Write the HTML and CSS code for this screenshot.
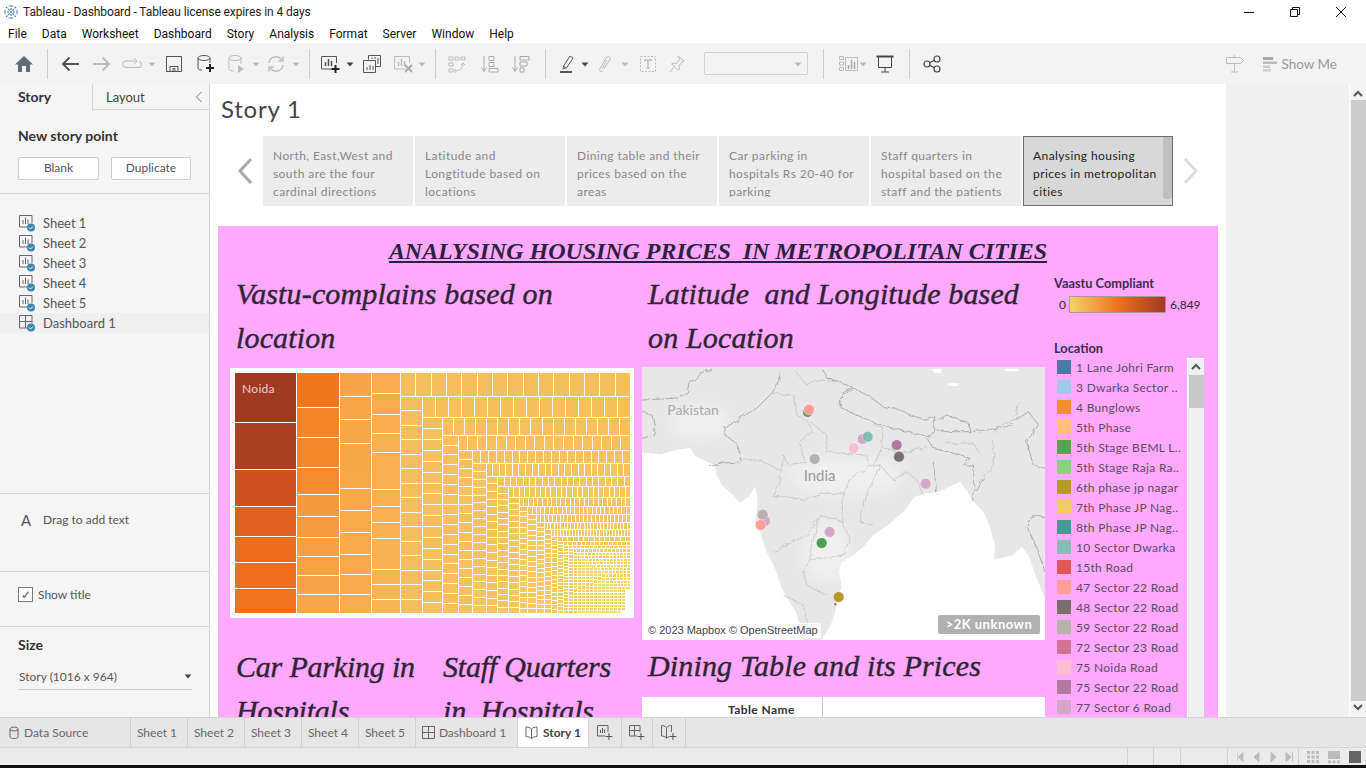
FILE: index.html
```html
<!DOCTYPE html>
<html lang="en">
<head>
    <meta charset="UTF-8">
    <meta name="viewport" content="width=device-width, initial-scale=1.0">
    <title>Tableau - Dashboard</title>
    <link rel="stylesheet" href="styles.css">
</head>
<body>
    <svg class="sprites" width="0" height="0">
        <symbol id="i-sheet" viewBox="0 0 18 18">
            <path d="M12 13H1.500V1.500H14V9" fill="none" stroke="#666"/>
            <path d="M5 10V6M7.500 10V3.500M10 10V5.500" stroke="#666"/>
            <circle cx="13" cy="13.500" r="4" fill="#3b86ab"/>
            <path d="M11 13.500l1.500 1.500 2.500-2.500" fill="none" stroke="#fff"/>
        </symbol>
        <symbol id="i-dash" viewBox="0 0 18 18">
            <path d="M11 14H1.500V1.500H14V9M1.500 7.500H14M7.500 1.500V14" fill="none" stroke="#666"/>
            <circle cx="13" cy="13.500" r="4" fill="#3b86ab"/>
            <path d="M11 13.500l1.500 1.500 2.500-2.500" fill="none" stroke="#fff"/>
        </symbol>
        <symbol id="i-caret" viewBox="0 0 8 20">
            <path d="M0.500 8.500h7L4 12.500z"/>
        </symbol>
        <filter id="wiggle" x="-5%" y="-5%" width="110%" height="110%">
            <feTurbulence type="fractalNoise" baseFrequency=".05" numOctaves="3" seed="4"/>
            <feDisplacementMap in="SourceGraphic" scale="14"/>
        </filter>
        <filter id="soft" x="-20%" y="-20%" width="140%" height="140%">
            <feGaussianBlur stdDeviation="22"/>
        </filter>
    </svg>

    <header class="title-bar">
        <svg class="app-logo" width="16" height="16" viewBox="0 0 16 16">
            <path d="M8 1v14M1 8h14M3 3l10 10M13 3L3 13" stroke="#3f7fb5" stroke-width="1.200" stroke-dasharray="2 1"/>
            <path d="M5.500 2h5M5.500 14h5M2 5.500v5M14 5.500v5" stroke="#7fa9cc"/>
        </svg>
        <span class="app-title">Tableau - Dashboard - Tableau license expires in 4 days</span>
        <div class="win-controls">
            <svg width="12" height="12" viewBox="0 0 12 12"><path d="M1 6.500h10" stroke="#111"/></svg>
            <svg width="12" height="12" viewBox="0 0 12 12"><path d="M1.500 3.500h7v7h-7zM3.500 3.500v-2h7v7h-2" fill="none" stroke="#111"/></svg>
            <svg width="12" height="12" viewBox="0 0 12 12"><path d="M1 1l10 10M11 1L1 11" stroke="#111"/></svg>
        </div>
    </header>

    <nav class="menu-bar">
        <span>File</span><span>Data</span><span>Worksheet</span><span>Dashboard</span><span>Story</span>
        <span>Analysis</span><span>Format</span><span>Server</span><span>Window</span><span>Help</span>
    </nav>

    <div class="toolbar">
        <svg class="tool first" viewBox="0 0 20 20"><path d="M10 2l9 8.500h-3V18h-4v-6H8v6H4v-7.500H1z" fill="#5e6b78"/></svg>
        <i class="sep s13"></i>
        <svg class="tool s12" viewBox="0 0 20 20"><path d="M19 10H3M9.500 3.500L3 10l6.500 6.500" fill="none" stroke="#555" stroke-width="2"/></svg>
        <svg class="tool s12" viewBox="0 0 20 20"><path d="M1 10h16M10.500 3.500L17 10l-6.500 6.500" fill="none" stroke="#bbb" stroke-width="2"/></svg>
        <svg class="tool s10" viewBox="0 0 20 20"><path d="M14 7H4a3 3 0 0 0 0 6.500h12a3 3 0 0 0 1-6M12 4l3 3-3 3" fill="none" stroke="#bbb"/></svg>
        <svg class="caret s6 off" viewBox="0 0 8 20"><use href="#i-caret"/></svg>
        <svg class="tool s8" viewBox="0 0 20 20"><path d="M2.500 2.500h15v15h-15zM6 17.500v-5h8v5M9 14.500h2v3H9z" fill="none" stroke="#555"/></svg>
        <svg class="tool s11" viewBox="0 0 20 20"><path d="M3 4v10c0 1.500 2 2 4 2M15 4v5" fill="none" stroke="#555"/><ellipse cx="9" cy="4" rx="6" ry="2.500" fill="none" stroke="#555"/><path d="M15 10v8M11 14h8" stroke="#222" stroke-width="2"/></svg>
        <svg class="tool s11" viewBox="0 0 20 20"><path d="M3 4v11c0 1.500 2 2 5 2M15 4v6" fill="none" stroke="#bbb"/><ellipse cx="9" cy="4" rx="6" ry="2.500" fill="none" stroke="#bbb"/><path d="M12 11l6 4-6 4z" fill="#bbb"/></svg>
        <svg class="caret s6 off" viewBox="0 0 8 20"><use href="#i-caret"/></svg>
        <svg class="tool s6" viewBox="0 0 20 20"><path d="M3 9a7 7 0 0 1 12-4l2 2M17 11a7 7 0 0 1-12 4l-2-2M17 2.500V7h-4.500M3 17.500V13h4.500" fill="none" stroke="#bbb" stroke-width="1.300"/></svg>
        <svg class="caret s6 off" viewBox="0 0 8 20"><use href="#i-caret"/></svg>
        <i class="sep s9"></i>
        <svg class="tool s10" viewBox="0 0 20 20"><path d="M13 15H1.500V2.500h15V9" fill="none" stroke="#555"/><path d="M5.500 12V8M8.500 12V5M11.500 12V7" stroke="#555" stroke-width="1.500"/><path d="M15.500 11v8M11.500 15h8" stroke="#222" stroke-width="2"/></svg>
        <svg class="caret s6 on" viewBox="0 0 8 20"><use href="#i-caret"/></svg>
        <svg class="tool s8" viewBox="0 0 20 20"><path d="M6.500 5.500v-4h12v11h-5M1.500 6.500h12v12h-12z" fill="#f3f3f3" stroke="#555"/><path d="M10 5V3.500M13 5V3M16 10V4M5 16v-3M8 16v-5M11 16v-4" stroke="#555"/></svg>
        <svg class="tool s11" viewBox="0 0 20 20"><path d="M12 15H1.500V2.500h15V9" fill="none" stroke="#bbb"/><path d="M5.500 12V8M8.500 12V5M11.500 12V7" stroke="#bbb" stroke-width="1.500"/><path d="M12 11l7 7M19 11l-7 7" stroke="#aaa" stroke-width="2"/></svg>
        <svg class="caret s5 off" viewBox="0 0 8 20"><use href="#i-caret"/></svg>
        <i class="sep s9"></i>
        <svg class="tool s11" viewBox="0 0 20 20"><path d="M2 3h4v3H2zM8 3h4v3H8zM14 3h4v3h-4zM2 9h4v3H2zM2 15h4v3H2z" fill="none" stroke="#bbb"/><path d="M16 9c0 5-3 8-8 8M8 14.500V19M14 11l2-2 2 2" fill="none" stroke="#bbb"/></svg>
        <svg class="tool s13" viewBox="0 0 20 20"><path d="M4 2v15M1.500 13.500L4 17.500l2.500-4M9 2.500h5v4H9zM9 8.500h5v4H9zM9 14.500h9v3.500H9z" fill="none" stroke="#aaa"/></svg>
        <svg class="tool s11" viewBox="0 0 20 20"><path d="M4 2v15M1.500 13.500L4 17.500l2.500-4M9 2.500h9v3.500H9zM9 8h7v4H9zM9 14h4v4H9z" fill="none" stroke="#aaa"/></svg>
        <i class="sep s14"></i>
        <svg class="tool s12" viewBox="0 0 20 20"><path d="M7 14l-2 1 .5-3L12 2l3 2-6.500 10zM5 12l3 2" fill="none" stroke="#555"/><path d="M2 18h12" stroke="#555" stroke-width="2"/></svg>
        <svg class="caret s3 on" viewBox="0 0 8 20"><use href="#i-caret"/></svg>
        <svg class="tool s6" viewBox="0 0 20 20"><path d="M8 17c-2 1.500-4 0-3-2.500L11 4c1.500-2.500 5-1 4 1.500L9.500 14c-.8 1.300-2.300.5-1.700-.8L12 6" fill="none" stroke="#bbb"/></svg>
        <svg class="caret s6 off" viewBox="0 0 8 20"><use href="#i-caret"/></svg>
        <svg class="tool s9" viewBox="0 0 20 20"><path d="M2.500 2.500h15v15h-15z" fill="none" stroke="#bbb" stroke-dasharray="2 1.500"/><path d="M6.500 7V6h7v1M10 6v8M8.500 14h3" fill="none" stroke="#aaa"/></svg>
        <svg class="tool s9" viewBox="0 0 20 20"><path d="M11 2l6 5-2 1-3 4 .5 3-2 .5-6-5.500 2-1 3 .5 3-4zM7 13l-4 5" fill="none" stroke="#bbb"/></svg>
        <div class="combo"><svg class="caret off" viewBox="0 0 8 20"><use href="#i-caret"/></svg></div>
        <i class="sep s15"></i>
        <svg class="tool s14" viewBox="0 0 20 20"><path d="M1.500 2.500h4v3h-4zM1.500 8h4v3h-4zM1.500 13.500h4v3h-4zM7.500 3.500h12v13h-12z" fill="none" stroke="#bbb"/><path d="M10.500 15v-4M13.500 15V6M16.500 15V8" stroke="#aaa" stroke-width="1.500"/></svg>
        <svg class="caret s1 off" viewBox="0 0 8 20"><use href="#i-caret"/></svg>
        <svg class="tool s8" viewBox="0 0 20 20"><path d="M1.500 2.500h17" stroke="#444" stroke-width="2"/><path d="M3.500 3v10.500h13V3M10 13.500v4.500M6 18h8" fill="none" stroke="#444"/></svg>
        <i class="sep s14"></i>
        <svg class="tool s12" viewBox="0 0 20 20"><g fill="none" stroke="#444" stroke-width="1.200"><circle cx="5" cy="10" r="3"/><circle cx="15" cy="5" r="3"/><circle cx="15" cy="15" r="3"/><path d="M7.700 8.700l4.600-2.400M7.700 11.300l4.600 2.400"/></g></svg>
        <div class="toolbar-right">
            <svg class="tool" viewBox="0 0 20 20"><path d="M1.500 3.500h14l3 3-3 3h-14zM9.500 1v2.500M9.500 9.500v8M6 18h7" fill="none" stroke="#bbb"/></svg>
            <svg class="showme-icon" viewBox="0 0 16 16"><path d="M1 1h10v3H1z" fill="#aaa"/><path d="M1 5.500h14v2.500H1z" fill="#bbb"/><path d="M1 9.500h7V12H1z" fill="#ccc"/><path d="M1 13h8v2.500H1z" fill="#ccc"/></svg>
            <span class="showme-text">Show Me</span>
        </div>
    </div>

    <div class="workspace">
        <aside class="sidebar">
            <div class="side-tabs">
                <div class="side-tab active">Story</div>
                <div class="side-tab">Layout
                    <svg class="collapse" width="8" height="12" viewBox="0 0 8 12"><path d="M6.500 1l-5 5 5 5" fill="none" stroke="#777"/></svg>
                </div>
            </div>
            <section class="new-point">
                <h3>New story point</h3>
                <div class="btn-row">
                    <button class="side-btn blank">Blank</button>
                    <button class="side-btn dup">Duplicate</button>
                </div>
            </section>
            <section class="sheet-list">
                <div class="sheet-row"><svg width="18" height="18"><use href="#i-sheet"/></svg>Sheet 1</div>
                <div class="sheet-row"><svg width="18" height="18"><use href="#i-sheet"/></svg>Sheet 2</div>
                <div class="sheet-row"><svg width="18" height="18"><use href="#i-sheet"/></svg>Sheet 3</div>
                <div class="sheet-row"><svg width="18" height="18"><use href="#i-sheet"/></svg>Sheet 4</div>
                <div class="sheet-row"><svg width="18" height="18"><use href="#i-sheet"/></svg>Sheet 5</div>
                <div class="sheet-row selected"><svg width="18" height="18"><use href="#i-dash"/></svg>Dashboard 1</div>
            </section>
            <section class="add-text"><span class="big-a">A</span>Drag to add text</section>
            <section class="show-title"><span class="checkbox">✓</span>Show title</section>
            <section class="size-box">
                <h3>Size</h3>
                <div class="size-select">Story (1016 x 964)<svg class="caret on" viewBox="0 0 8 20"><use href="#i-caret"/></svg></div>
            </section>
        </aside>

        <main class="story">
            <div class="story-title">Story 1</div>
            <div class="navigator">
                <svg class="nav-arrow" width="16" height="28" viewBox="0 0 16 28"><path d="M14 2L3 14l11 12" fill="none" stroke="#aaa" stroke-width="3"/></svg>
                <div class="point"><p>North, East,West and south are the four cardinal directions</p></div>
                <div class="point"><p>Latitude and Longtitude based on locations</p></div>
                <div class="point"><p>Dining table and their prices based on the areas</p></div>
                <div class="point"><p>Car parking in hospitals Rs 20-40 for parking</p></div>
                <div class="point"><p>Staff quarters in hospital based on the staff and the patients</p></div>
                <div class="point current"><p>Analysing housing prices in metropolitan cities</p></div>
                <svg class="nav-arrow next" width="16" height="28" viewBox="0 0 16 28"><path d="M2 2l11 12L2 26" fill="none" stroke="#ddd" stroke-width="3"/></svg>
            </div>

            <div class="dashboard">
                <h1 class="dash-head">ANALYSING HOUSING PRICES&nbsp; IN METROPOLITAN CITIES</h1>
                <div class="dash-cols">
                    <div class="col-left">
                        <h2 class="viz-title">Vastu-complains based on location</h2>
                        <div class="treemap-frame">
                            <svg id="treemap" class="treemap" viewBox="15 24 1185 720"></svg>
                            <span class="noida">Noida</span>
                        </div>
                        <div class="two-titles">
                            <h2 class="viz-title">Car Parking in Hospitals</h2>
                            <h2 class="viz-title">Staff Quarters in&nbsp; Hospitals</h2>
                        </div>
                    </div>

                    <div class="col-mid">
                        <h2 class="viz-title short">Latitude&nbsp; and Longitude based on Location</h2>
                        <div class="map">
                            <svg class="map-svg" viewBox="6 6 1209 819">
                                <rect x="6" y="6" width="1209" height="819" fill="#e7e7e7"/>
                                <g fill="#f0f0f0" filter="url(#soft)">
                                    <ellipse cx="620" cy="330" rx="170" ry="60"/>
                                    <ellipse cx="560" cy="560" rx="70" ry="90"/>
                                    <ellipse cx="180" cy="170" rx="90" ry="50"/>
                                </g>
                                <path d="M6 262L60 268 110 255 150 248 165 272 190 285 222 300 230 330 245 360 285 395 300 415 325 395 345 365 352 395 352 430 345 470 360 500 380 560 405 610 425 670 445 705 470 745 480 790 490 825H6Z" fill="#fff"/>
                                <path d="M545 825L570 785 585 745 590 705 605 665 597 620 605 590 640 570 670 545 700 510 745 480 790 440 825 395 860 385 895 380 960 350 985 385 1000 410 1030 440 1045 470 1065 540 1062 585 1120 570 1145 545 1165 570 1190 640 1205 675 1215 700V825Z" fill="#fff"/>
                                <path d="M875 12h30v12h-20zM925 55h30v8h-30zM1095 12h40v6h-40z" fill="#fff"/>
                                <g filter="url(#wiggle)" fill="none" stroke-linejoin="round">
                                    <g stroke="#8d8d8d" stroke-width="2">
                                        <path d="M415 15L420 50 395 85 350 130 290 165 255 190 255 210 290 235 302 270 300 290 240 295 210 305"/>
                                        <path d="M6 105L100 100 145 85 150 55 190 20 215 12"/>
                                        <path d="M6 140L35 150 47 185 40 210 6 220"/>
                                        <path d="M550 15L560 40 600 50 640 70 690 95 730 125 770 130 810 150 860 165 885 155 880 195"/>
                                        <path d="M640 70L605 85 600 125 650 150 720 180 800 200 860 215 885 200"/>
                                        <path d="M885 170L920 150 985 175 990 200 920 200 890 195"/>
                                        <path d="M860 220L880 250 930 262 990 280 970 300 1000 300 1005 380 995 405"/>
                                        <path d="M880 290L890 385"/>
                                        <path d="M1000 200L1100 185 1165 140 1195 180 1160 230 1180 300 1215 310"/>
                                        <path d="M1030 340L1010 378"/>
                                        <path d="M1160 490L1180 450 1215 455M1165 490L1190 550 1215 620"/>
                                    </g>
                                    <g stroke="#b4b4b4" stroke-width="1.800">
                                        <path d="M463 15L500 60 525 45 600 50M400 85L460 90 470 150 505 170 515 200 480 235 495 290 445 300 430 270 425 320 410 375 400 395 440 395 490 405 540 385 610 385 630 340 690 305 720 300 760 345 800 320 830 345 850 390"/>
                                        <path d="M300 285L360 285 430 320M510 170L560 210 560 260 610 265 680 270 690 305M700 180L730 190 725 250 700 300M730 250L790 265 860 245M610 385L605 470 630 520M720 300L680 390 660 470 700 480M540 450L610 470M540 450L510 560 510 585 610 570 630 520M510 585L490 620 500 660 560 690M400 560L500 510 540 450M430 690L490 720 500 770M920 235L1000 235 1020 265M1060 225L1060 300 1030 340M1135 110L1130 150 1060 200"/>
                                    </g>
                                </g>
                                <text class="map-label" x="82" y="151">Pakistan</text>
                                <text class="map-label india" x="491" y="349">India</text>
                                <g stroke="#fff" stroke-width="2" stroke-opacity=".5">
                                    <circle cx="503" cy="142" r="15" fill="#59a14f"/>
                                    <circle cx="507" cy="134" r="16" fill="#ff9d9a"/>
                                    <circle cx="668" cy="222" r="16" fill="#d4a6c8"/>
                                    <circle cx="683" cy="215" r="16" fill="#86bcb6"/>
                                    <circle cx="641" cy="249" r="16" fill="#fabfd2"/>
                                    <circle cx="770" cy="240" r="16" fill="#b07aa1"/>
                                    <circle cx="777" cy="275" r="16" fill="#79706e"/>
                                    <circle cx="524" cy="282" r="16" fill="#bab0ac"/>
                                    <circle cx="857" cy="356" r="16" fill="#d4a6c8"/>
                                    <circle cx="375" cy="468" r="16" fill="#d4a6c8"/>
                                    <circle cx="368" cy="449" r="16" fill="#bab0ac"/>
                                    <circle cx="362" cy="480" r="16" fill="#ff9d9a"/>
                                    <circle cx="569" cy="501" r="16" fill="#d4a6c8"/>
                                    <circle cx="545" cy="534" r="16" fill="#4e9f50"/>
                                    <circle cx="596" cy="696" r="16" fill="#b6992d"/>
                                </g>
                                <circle cx="586" cy="718" r="4" fill="#888"/>
                            </svg>
                            <span class="map-credit">© 2023 Mapbox © OpenStreetMap</span>
                            <span class="map-unknown">&gt;2K unknown</span>
                        </div>
                        <h2 class="viz-title dining">Dining Table and its Prices</h2>
                        <div class="dining-table">
                            <div class="table-head">Table Name</div>
                        </div>
                    </div>

                    <div class="col-legend">
                        <div class="legend-name">Vaastu Compliant</div>
                        <div class="ramp-row"><span class="ramp-min">0</span><span class="ramp"></span><span>6,849</span></div>
                        <div class="legend-name location">Location</div>
                        <div class="legend-box">
                            <ul class="legend-list">
                                <li><i class="swatch c1"></i>1 Lane Johri Farm</li>
                                <li><i class="swatch c2"></i>3 Dwarka Sector ..</li>
                                <li><i class="swatch c3"></i>4 Bunglows</li>
                                <li><i class="swatch c4"></i>5th Phase</li>
                                <li><i class="swatch c5"></i>5th Stage BEML L..</li>
                                <li><i class="swatch c6"></i>5th Stage Raja Ra..</li>
                                <li><i class="swatch c7"></i>6th phase jp nagar</li>
                                <li><i class="swatch c8"></i>7th Phase JP Nag..</li>
                                <li><i class="swatch c9"></i>8th Phase JP Nag..</li>
                                <li><i class="swatch c10"></i>10 Sector Dwarka</li>
                                <li><i class="swatch c11"></i>15th Road</li>
                                <li><i class="swatch c12"></i>47 Sector 22 Road</li>
                                <li><i class="swatch c13"></i>48 Sector 22 Road</li>
                                <li><i class="swatch c14"></i>59 Sector 22 Road</li>
                                <li><i class="swatch c15"></i>72 Sector 23 Road</li>
                                <li><i class="swatch c16"></i>75 Noida Road</li>
                                <li><i class="swatch c17"></i>75 Sector 22 Road</li>
                                <li><i class="swatch c18"></i>77 Sector 6 Road</li>
                            </ul>
                            <div class="legend-scroll">
                                <svg class="chev" width="10" height="8" viewBox="0 0 10 8"><path d="M1 6l4-4 4 4" fill="none" stroke="#555" stroke-width="2"/></svg>
                                <span class="legend-thumb"></span>
                            </div>
                        </div>
                    </div>
                </div>
            </div>
        </main>

        <div class="story-gutter"></div>
        <div class="page-scroll">
            <svg class="scroll-arrow" width="10" height="8" viewBox="0 0 10 8"><path d="M1 6l4-4 4 4" fill="none" stroke="#555" stroke-width="2"/></svg>
            <span class="page-thumb"></span>
            <svg class="scroll-arrow" width="10" height="8" viewBox="0 0 10 8"><path d="M1 2l4 4 4-4" fill="none" stroke="#555" stroke-width="2"/></svg>
        </div>
    </div>

    <div class="tab-bar">
        <div class="tab source">
            <svg width="12" height="14" viewBox="0 0 12 14"><ellipse cx="6" cy="3" rx="4" ry="2" fill="none" stroke="#666"/><path d="M2 3v8c0 2 8 2 8 0V3" fill="none" stroke="#666"/></svg>
            Data Source
        </div>
        <div class="tab sheet">Sheet 1</div>
        <div class="tab sheet">Sheet 2</div>
        <div class="tab sheet">Sheet 3</div>
        <div class="tab sheet">Sheet 4</div>
        <div class="tab sheet">Sheet 5</div>
        <div class="tab dash">
            <svg width="13" height="13" viewBox="0 0 13 13"><path d="M.500.500h12v12H.500zM.500 6.500h12M6.500.500v12" fill="none" stroke="#666"/></svg>
            Dashboard 1
        </div>
        <div class="tab story-tab">
            <svg width="13" height="13" viewBox="0 0 13 13"><path d="M6.500 3C5 1.500 3 1 1 1v9.500c2 0 4 .5 5.500 2 1.500-1.500 3.500-2 5.500-2V1c-2 0-4 .5-5.500 2zv9.500" fill="none" stroke="#666"/></svg>
            Story 1
        </div>
        <div class="tab add">
            <svg width="17" height="17" viewBox="0 0 17 17"><path d="M9 12H1.500V1.500H12V8" fill="none" stroke="#666"/><path d="M4.500 9V6M6.500 9V4M8.500 9V5.500M13 9v7M9.500 12.500h7" stroke="#555"/></svg>
        </div>
        <div class="tab add narrow">
            <svg width="17" height="17" viewBox="0 0 17 17"><path d="M9 12H1.500V1.500H12V8M1.500 6.500H12M6.500 1.500V12" fill="none" stroke="#666"/><path d="M13 9v7M9.500 12.500h7" stroke="#555"/></svg>
        </div>
        <div class="tab add">
            <svg width="17" height="17" viewBox="0 0 17 17"><path d="M9 12.500L6.500 14C5 12.500 3 12 1.500 12V1.500C3 1.500 5 2 6.500 3.500 8 2 10 1.500 11.500 1.500V8M6.500 3.500V14" fill="none" stroke="#666"/><path d="M13 9v7M9.500 12.500h7" stroke="#555"/></svg>
        </div>
    </div>

    <footer class="status-bar">
        <span class="seg w26"></span>
        <span class="seg w27"></span>
        <span class="seg w47"></span>
        <div class="seg tab-nav">
            <svg width="60" height="10" viewBox="0 0 60 10"><path d="M0 .500v9M6 .500L1.500 5 6 9.500zM22 .500L17 5l5 4.500zM34 .500L39 5l-5 4.500zM49 .500L54 5l-5 4.500zM55.500 .500v9" fill="#bbb" stroke="#bbb"/></svg>
        </div>
        <div class="seg view-icons">
            <svg width="12" height="12" viewBox="0 0 12 12"><path d="M0 0h3v3H0zM4.500 0h3v3h-3zM9 0h3v3H9zM0 4.500h3v3H0zM4.500 4.500h3v3h-3zM9 4.500h3v3H9zM0 9h3v3H0zM4.500 9h3v3h-3zM9 9h3v3H9z" fill="#bbb"/></svg>
            <svg width="12" height="12" viewBox="0 0 12 12"><path d="M0 0h12v8H0zM0 9.500h3V12H0zM4.500 9.500h3V12h-3zM9 9.500h3V12H9z" fill="#bbb"/></svg>
            <svg width="12" height="12" viewBox="0 0 12 12"><path d="M0 0h12v12H0z" fill="#666"/></svg>
        </div>
    </footer>
    <div class="black-strip"></div>

    <script src="treemap.js"></script>
</body>
</html>
```
FILE: styles.css
```css
* {
    box-sizing: border-box;
    margin: 0;
    padding: 0;
}

body {
    width: 1366px;
    height: 768px;
    overflow: hidden;
    display: flex;
    flex-direction: column;
    font-family: "Lato", "Liberation Sans", sans-serif;
    font-size: 13px;
    color: #555;
    background-color: #fff;
}

.sprites {
    position: absolute;
}

/* window chrome */
.title-bar {
    height: 24px;
    display: flex;
    align-items: center;
    padding-left: 3px;
    background-color: #fff;
    color: #222;
    font-family: "Roboto", sans-serif;
    font-size: 12px;
}

.app-title {
    margin-left: 4px;
    letter-spacing: -.1px;
}

.win-controls {
    margin-left: auto;
    display: flex;
    gap: 34px;
    padding-right: 19px;
}

.menu-bar {
    height: 19px;
    display: flex;
    align-items: center;
    gap: 15px;
    padding-left: 8px;
    background-color: #fff;
    color: #111;
    font-family: "Roboto", sans-serif;
    font-size: 12px;
}

/* toolbar */
.toolbar {
    height: 41px;
    display: flex;
    align-items: center;
    background-color: #f3f3f3;
}

.tool {
    width: 20px;
    height: 20px;
    flex: none;
}

.tool.first {
    margin-left: 14px;
}

.caret {
    width: 8px;
    height: 20px;
    flex: none;
}

.caret.off {
    fill: #bbb;
}

.caret.on {
    fill: #444;
}

.sep {
    width: 1px;
    height: 30px;
    flex: none;
    background-color: #ccc;
}

.s1 { margin-left: 1px; }
.s3 { margin-left: 3px; }
.s5 { margin-left: 5px; }
.s6 { margin-left: 6px; }
.s8 { margin-left: 8px; }
.s9 { margin-left: 9px; }
.s10 { margin-left: 10px; }
.s11 { margin-left: 11px; }
.s12 { margin-left: 12px; }
.s13 { margin-left: 13px; }
.s14 { margin-left: 14px; }
.s15 { margin-left: 15px; }

.combo {
    width: 104px;
    height: 23px;
    margin-left: 17px;
    flex: none;
    display: flex;
    align-items: center;
    justify-content: flex-end;
    padding-right: 5px;
    border: 1px solid #d2d2d2;
    border-radius: 2px;
}

.toolbar-right {
    margin-left: auto;
    display: flex;
    align-items: center;
    padding-right: 29px;
}

.showme-icon {
    width: 16px;
    height: 16px;
    margin-left: 17px;
}

.showme-text {
    margin-left: 3px;
    font-size: 13.500px;
    color: #999;
}

/* main area */
.workspace {
    flex: 1;
    display: flex;
    overflow: hidden;
    min-height: 0;
}

.sidebar {
    width: 210px;
    flex: none;
    display: flex;
    flex-direction: column;
    background-color: #f5f5f5;
    border-right: 1px solid #d4d4d4;
}

.side-tabs {
    height: 26px;
    display: flex;
    flex: none;
}

.side-tab {
    position: relative;
    width: 117px;
    padding: 5px 0 0 13px;
    border-bottom: 1px solid #d4d4d4;
    border-left: 1px solid #d4d4d4;
    color: #444;
}

.side-tab.active {
    width: 92px;
    padding-top: 4px;
    padding-left: 18px;
    border: none;
    font-size: 14px;
    font-weight: 700;
    color: #333;
}

.collapse {
    position: absolute;
    right: 6px;
    top: 7px;
}

.new-point {
    height: 84px;
    flex: none;
    padding: 17px 18px 0;
    border-bottom: 1px solid #d4d4d4;
}

.sidebar h3 {
    font-size: 14px;
    line-height: 17px;
    font-weight: 700;
    color: #333;
}

.btn-row {
    display: flex;
    gap: 12px;
    margin-top: 13px;
}

.side-btn {
    height: 23px;
    padding-bottom: 2px;
    border: 1px solid #ccc;
    border-radius: 2px;
    background-color: #fff;
    color: #555;
    font-family: inherit;
    font-size: 12px;
}

.side-btn.blank {
    width: 81px;
}

.side-btn.dup {
    width: 80px;
}

.sheet-list {
    height: 300px;
    flex: none;
    padding-top: 19px;
    border-bottom: 1px solid #d4d4d4;
}

.sheet-row {
    height: 20px;
    display: flex;
    align-items: center;
    gap: 7px;
    padding-left: 18px;
    color: #555;
}

.sheet-row.selected {
    background-color: #efefef;
}

.add-text {
    height: 78px;
    flex: none;
    display: flex;
    align-items: flex-start;
    padding: 18px 0 0 21px;
    border-bottom: 1px solid #d4d4d4;
    font-size: 12px;
}

.big-a {
    width: 22px;
    font-size: 15px;
    line-height: 16px;
    color: #555;
}

.show-title {
    height: 55px;
    flex: none;
    display: flex;
    align-items: flex-start;
    gap: 5px;
    padding: 15px 0 0 18px;
    border-bottom: 1px solid #d4d4d4;
    font-size: 12px;
    line-height: 16px;
}

.checkbox {
    width: 15px;
    height: 15px;
    border: 1px solid #777;
    background-color: #fff;
    font-size: 12px;
    line-height: 13px;
    text-align: center;
}

.size-box {
    padding: 9px 18px 0;
}

.size-select {
    position: relative;
    height: 27px;
    margin-top: 10px;
    padding-top: 6px;
    border-bottom: 1px solid #ccc;
    font-size: 12px;
    width: 174px;
    padding-left: 1px;
}

.size-select .caret {
    position: absolute;
    right: 0;
    top: 3px;
}

.story {
    width: 1016px;
    flex: none;
    overflow: hidden;
    background-color: #fff;
}

.story-title {
    height: 52px;
    padding: 8px 0 0 11px;
    font-size: 24px;
    line-height: 34px;
    color: #444;
    letter-spacing: .8px;
}

.navigator {
    height: 70px;
    display: flex;
    align-items: center;
    gap: 2px;
    padding-left: 53px;
    position: relative;
}

.nav-arrow {
    position: absolute;
    left: 27px;
    top: 21px;
}

.nav-arrow.next {
    left: 973px;
}

.point {
    width: 150px;
    height: 70px;
    flex: none;
    padding: 11px 10px 0 10px;
    background-color: #ececec;
    color: #888;
    font-size: 12px;
    line-height: 18px;
    letter-spacing: .42px;
}

.point p {
    height: 50px;
    overflow: hidden;
}

.point.current {
    position: relative;
    padding-top: 10px;
    padding-left: 9px;
    border: 1px solid #6e6e6e;
    background-color: #d8d8d8;
    color: #222;
}

.point.current::after {
    content: "";
    position: absolute;
    right: 0;
    top: 0;
    bottom: 6px;
    width: 9px;
    background-color: #bfbfbf;
    border-radius: 0 0 3px 3px;
}

/* dashboard */
.dashboard {
    width: 1000px;
    height: 964px;
    margin: 20px 0 0 8px;
    padding-left: 12px;
    background-color: #ffaaff;
    color: #2f2433;
}

.dash-head {
    height: 46px;
    padding-top: 10px;
    padding-right: 12px;
    font-family: "Liberation Serif", serif;
    font-size: 24px;
    line-height: 30px;
    font-weight: 700;
    font-style: italic;
    letter-spacing: -.05px;
    text-align: center;
    text-decoration: underline;
    color: #2b2140;
}

.dash-cols {
    display: flex;
    gap: 8px;
}

.col-left {
    width: 404px;
    flex: none;
}

.col-mid {
    width: 403px;
    flex: none;
}

.col-legend {
    width: 150px;
    margin-left: 1px;
    flex: none;
}

.viz-title {
    height: 96px;
    padding-left: 6px;
    font-family: "Liberation Serif", serif;
    font-size: 30px;
    line-height: 44px;
    font-weight: 400;
    font-style: italic;
    letter-spacing: .15px;
    -webkit-text-stroke: .4px #2f2433;
}

.viz-title.short {
    height: 95px;
}

.treemap-frame {
    position: relative;
    height: 250px;
    padding: 5px 4px 5px 5px;
    background-color: #fff;
}

.treemap {
    display: block;
    width: 395px;
    height: 240px;
    shape-rendering: crispEdges;
}

.noida {
    position: absolute;
    left: 12px;
    top: 13px;
    font-size: 12px;
    letter-spacing: .3px;
    color: #f1d3c8;
}

.two-titles {
    display: flex;
    margin-top: 27px;
}

.two-titles .viz-title {
    letter-spacing: -.2px;
}

.two-titles .viz-title:first-child {
    width: 207px;
    flex: none;
}

.two-titles .viz-title:last-child {
    width: 197px;
    flex: none;
    padding-right: 4px;
}

.map {
    position: relative;
    height: 273px;
    overflow: hidden;
}

.map-svg {
    display: block;
    width: 403px;
    height: 273px;
}

.map-label {
    font-family: "Lato", sans-serif;
    font-size: 42px;
    fill: #aaa;
}

.map-label.india {
    font-size: 45px;
    fill: #999;
}

.map-credit {
    position: absolute;
    left: 3px;
    bottom: 2px;
    padding: 0 3px;
    background-color: rgba(255, 255, 255, .8);
    font-family: "Liberation Sans", sans-serif;
    font-size: 11px;
    line-height: 15px;
    color: #444;
}

.map-unknown {
    position: absolute;
    right: 5px;
    bottom: 6px;
    width: 102px;
    height: 19px;
    border-radius: 2px;
    background-color: #b0b0b0;
    color: #fff;
    font-size: 13px;
    font-weight: 700;
    line-height: 19px;
    text-align: center;
    letter-spacing: .5px;
}

.viz-title.dining {
    height: 53px;
    margin-top: 4px;
}

.dining-table {
    height: 200px;
    background-color: #fff;
}

.table-head {
    width: 181px;
    height: 26px;
    padding-top: 5px;
    padding-left: 86px;
    border-right: 1px solid #ccc;
    font-size: 12px;
    font-weight: 700;
    letter-spacing: .4px;
    color: #333;
}

.legend-name {
    height: 16px;
    margin-top: 3px;
    font-size: 12.800px;
    font-weight: 700;
    color: #3d2a55;
}

.ramp-row {
    height: 18px;
    display: flex;
    align-items: center;
    margin-top: 4px;
    padding-left: 5px;
    font-size: 12px;
}

.ramp-min {
    width: 10px;
}

.ramp {
    width: 97px;
    height: 17px;
    margin-right: 4px;
    border: 1px solid #a59a9a;
    background: linear-gradient(to right, #f5d368, #f0721e 50%, #9f3922);
}

.legend-name.location {
    margin-top: 27px;
}

.legend-box {
    position: relative;
    display: flex;
    margin-top: 2px;
}

.legend-list {
    list-style: none;
    width: 133px;
    flex: none;
    margin-top: -1px;
}

.legend-list li {
    height: 20px;
    display: flex;
    align-items: center;
    gap: 5px;
    padding-left: 3px;
    font-size: 12px;
    white-space: nowrap;
    color: #5c4a62;
    letter-spacing: .3px;
}

.swatch {
    width: 14px;
    height: 14px;
    flex: none;
}

.c1 { background-color: #4e79a7; }
.c2 { background-color: #a0cbe8; }
.c3 { background-color: #f28e2b; }
.c4 { background-color: #ffbe7d; }
.c5 { background-color: #59a14f; }
.c6 { background-color: #8cd17d; }
.c7 { background-color: #b6992d; }
.c8 { background-color: #f1ce63; }
.c9 { background-color: #499894; }
.c10 { background-color: #86bcb6; }
.c11 { background-color: #e15759; }
.c12 { background-color: #ff9d9a; }
.c13 { background-color: #79706e; }
.c14 { background-color: #bab0ac; }
.c15 { background-color: #d37295; }
.c16 { background-color: #fabfd2; }
.c17 { background-color: #b07aa1; }
.c18 { background-color: #d4a6c8; }

.legend-scroll {
    position: relative;
    width: 17px;
    height: 360px;
    background-color: #f0f0f0;
    border-top: 1px solid #fff;
    border-left: 1px solid #fff;
}

.chev {
    position: absolute;
    left: 3px;
    top: 4px;
}

.legend-thumb {
    position: absolute;
    left: 1px;
    top: 16px;
    width: 15px;
    height: 33px;
    background-color: #c8c8c8;
}

.story-gutter {
    width: 123px;
    flex: none;
    background-color: #f0f0f0;
}

.page-scroll {
    width: 17px;
    flex: none;
    display: flex;
    flex-direction: column;
    align-items: center;
    justify-content: space-between;
    padding: 6px 0;
    background-color: #f3f3f3;
    border-left: 1px solid #fff;
}

.page-thumb {
    width: 15px;
    height: 601px;
    background-color: #cdcdcd;
}

/* sheet tabs */
.tab-bar {
    height: 31px;
    flex: none;
    display: flex;
    border-top: 1px solid #d4d4d4;
    border-bottom: 1px solid #d4d4d4;
    background-color: #e6e6e6;
    color: #666;
    font-size: 12px;
}

.tab {
    display: flex;
    align-items: center;
    justify-content: center;
    gap: 5px;
    border-right: 1px solid #d0d0d0;
}

.tab.source {
    width: 131px;
    justify-content: flex-start;
    padding-left: 8px;
    gap: 4px;
}

.tab.sheet {
    width: 57px;
    padding-right: 4px;
}

.tab.dash {
    width: 102px;
    padding-right: 5px;
    gap: 4px;
}

.tab.story-tab {
    width: 71px;
    background-color: #fff;
    color: #444;
    font-weight: 700;
}

.tab.add {
    width: 33px;
    padding-right: 2px;
}

.tab.narrow {
    width: 31px;
}

.status-bar {
    height: 17px;
    flex: none;
    display: flex;
    justify-content: flex-end;
    background-color: #ebebeb;
}

.seg {
    border-left: 1px solid #d0d0d0;
}

.w26 { width: 26px; }
.w27 { width: 27px; }
.w47 { width: 47px; }

.tab-nav {
    width: 71px;
    display: flex;
    align-items: center;
    padding-left: 9px;
}

.view-icons {
    width: 68px;
    display: flex;
    align-items: center;
    gap: 9px;
    padding-left: 8px;
}

.black-strip {
    height: 3px;
    flex: none;
    background-color: #111;
}
```
FILE: treemap.js
```js
// Draws the Vaastu treemap. Coordinates are in the svg's viewBox units (3 units = 1px).
const svg = document.getElementById('treemap');

function hex(c) {
    return [1, 3, 5].map(i => parseInt(c.substr(i, 2), 16));
}

function mix(a, b, t) {
    const ca = hex(a);
    const cb = hex(b);
    return `rgb(${ca.map((v, i) => Math.round(v + (cb[i] - v) * t)).join(',')})`;
}

function rect(x, y, w, h, fill) {
    const r = document.createElementNS('http://www.w3.org/2000/svg', 'rect');
    r.setAttribute('x', x);
    r.setAttribute('y', y);
    r.setAttribute('width', w);
    r.setAttribute('height', h);
    r.setAttribute('fill', fill);
    svg.appendChild(r);
}

// The large columns on the left, with their measured cell edges
const bigColumns = [
    { x: 15, w: 183, colors: ['#9f3922', '#ab4022', '#d0501f', '#e2611e', '#ec6b1c', '#ee6e1c', '#f0721e'],
      cells: [[24, 171], [173, 312], [314, 423], [425, 513], [515, 591], [593, 669], [671, 744]] },
    { x: 200, w: 128, colors: ['#f2761f', '#f4842a', '#f4862b', '#f58a2e', '#f69a3f', '#f69c40', '#f6a043', '#f7a345', '#f7a548', '#f7a749'],
      cells: [[24, 126], [128, 216], [218, 306], [308, 387], [389, 453], [455, 516], [518, 573], [575, 630], [632, 687], [689, 744]] },
    { x: 330, w: 94, colors: ['#f8a546', '#f9ad4e'],
      cells: [[24, 93], [95, 162], [164, 234], [236, 302], [304, 369], [371, 435], [437, 501], [503, 567], [569, 627], [629, 687], [689, 744]] },
    { x: 426, w: 85, colors: ['#f8ad4e', '#f7b455'],
      cells: [[24, 84], [86, 147], [149, 204], [206, 261], [263, 320], [322, 372], [374, 423], [425, 471], [473, 519], [521, 566], [568, 612], [614, 657], [659, 702], [704, 744]] }
];

bigColumns.forEach(col => {
    col.cells.forEach((c, i) => {
        let fill = col.colors[i];
        if (col.colors.length === 2) {
            fill = mix(col.colors[0], col.colors[1], i / (col.cells.length - 1));
        }
        rect(col.x, c[0], col.w, c[1] - c[0], fill);
    });
});

// Strips that spiral into the bottom right corner: [thickness, number of cells]
const strips = [
    [69, 15], [64, 15], [61, 16], [56, 18], [49, 17], [44, 18], [43, 18], [40, 18],
    [36, 20], [38, 19], [35, 22], [32, 18], [29, 21], [29, 20], [28, 23], [29, 19],
    [24, 24], [23, 20], [22, 24], [23, 19], [22, 24], [20, 20], [18, 26], [18, 18],
    [17, 26], [16, 18]
];

const right = 1200;
const bottom = 744;
let x = 513;
let y = 24;
let step = 0;

function drawStrip(thick, n, gap) {
    const horizontal = step % 2 === 0;
    const t = Math.min(step / 50, 1);
    const fill = mix('#f6bf5d', '#f5d368', t);
    if (horizontal) {
        const cw = (right - x - gap * (n - 1)) / n;
        for (let i = 0; i < n; i++) {
            rect(x + i * (cw + gap), y, cw, thick, fill);
        }
        y += thick + gap;
    } else {
        const ch = (bottom - y - gap * (n - 1)) / n;
        for (let i = 0; i < n; i++) {
            rect(x, y + i * (ch + gap), thick, ch, fill);
        }
        x += thick + gap;
    }
    step++;
}

strips.forEach(s => drawStrip(s[0], s[1], 3));

// Tiny cells at the end of the spiral
let thick = 15;
while (x < right - 20 && y < bottom - 8) {
    const horizontal = step % 2 === 0;
    const len = Math.max(horizontal ? thick * 0.8 : thick * 0.5, 6);
    const room = horizontal ? right - x : bottom - y;
    const size = Math.max(horizontal ? thick * 0.7 : thick, 6);
    drawStrip(size, Math.max(2, Math.round(room / (len + 3))), 3);
    thick = Math.max(thick * 0.94, 9);
}

// The treemap does not quite fill its last corner
rect(1170, 735, 30, 9, '#fff');
rect(1190, 720, 10, 15, '#fff');
```
